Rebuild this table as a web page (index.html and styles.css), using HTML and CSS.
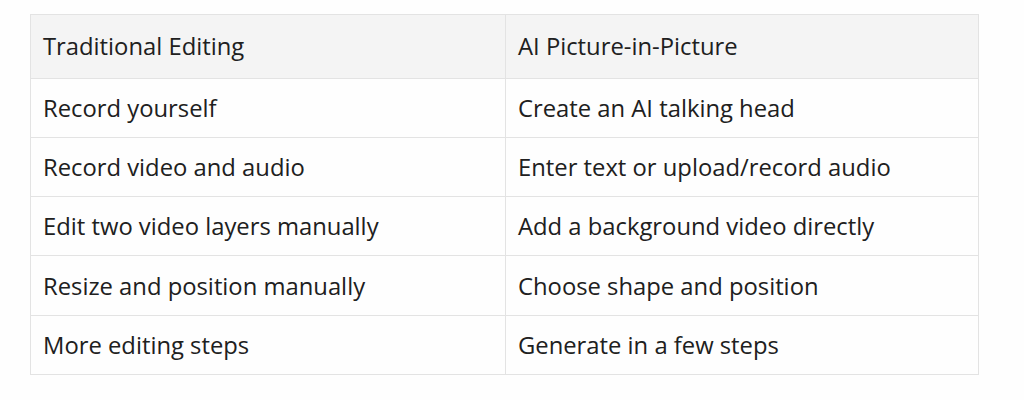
FILE: index.html
```html
<!DOCTYPE html>
<html lang="en">
<head>
<meta charset="utf-8">
<link rel="stylesheet" href="styles.css">
</head>
<body>
<div class="page">
<table class="cmp">
<thead>
<tr><th>Traditional Editing</th><th>AI Picture-in-Picture</th></tr>
</thead>
<tbody>
<tr><td>Record yourself</td><td>Create an AI talking head</td></tr>
<tr><td>Record video and audio</td><td>Enter text or upload/record audio</td></tr>
<tr><td>Edit two video layers manually</td><td>Add a background video directly</td></tr>
<tr><td>Resize and position manually</td><td>Choose shape and position</td></tr>
<tr><td>More editing steps</td><td>Generate in a few steps</td></tr>
</tbody>
</table>
</div>
</body>
</html>
```
FILE: styles.css
```css
html, body {
  margin: 0;
  padding: 0;
  background: #fefefe;
}
.page {
  padding: 14px 0 0 30px;
}
.cmp {
  width: 949px;
  border-collapse: collapse;
  font-family: "Open Sans", "Noto Sans", sans-serif;
  font-size: 23.8px;
  color: #202020;
}
.cmp th, .cmp td {
  border: 1px solid #e3e3e3;
  text-align: left;
  font-weight: 400;
  padding: 0 12px;
}
.cmp th {
  background: #f4f4f4;
  height: 62.5px;
}
.cmp td {
  height: 58.3px;
}
.cmp th:first-child, .cmp td:first-child {
  width: 450px;
}
```
